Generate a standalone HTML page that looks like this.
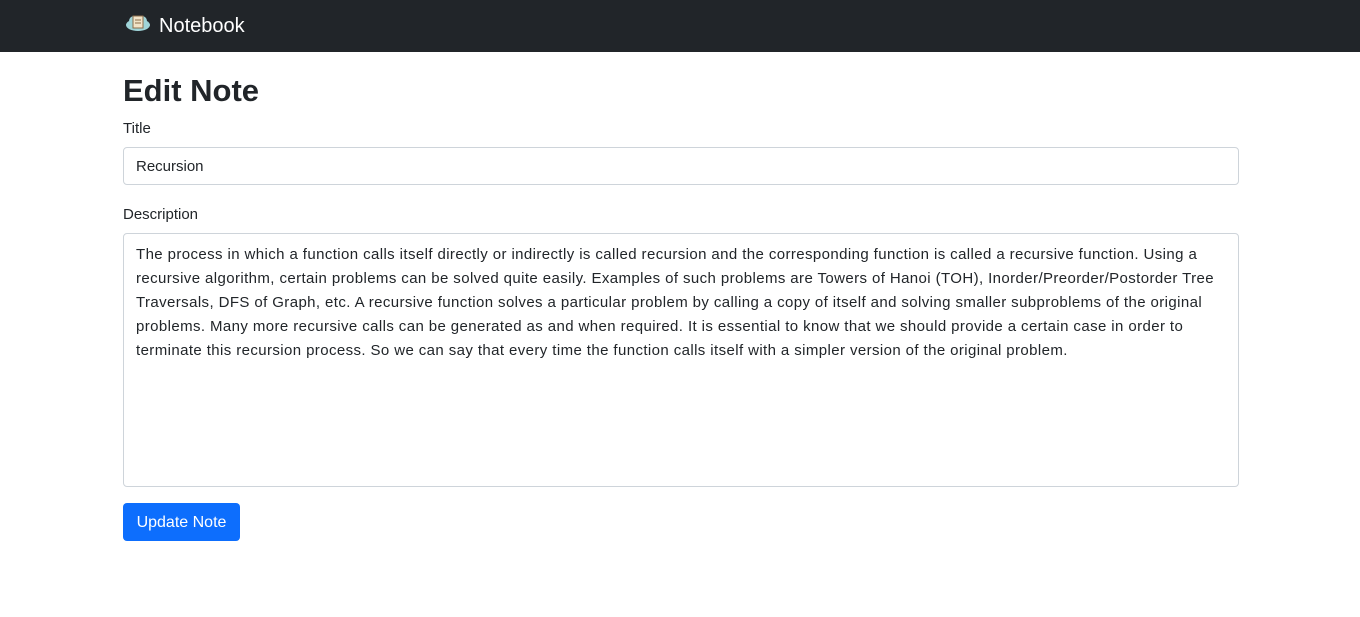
<!DOCTYPE html>
<html><head><style>
*{box-sizing:border-box;margin:0;padding:0}
body{width:1360px;height:617px;background:#fff;font-family:"Liberation Sans",sans-serif;color:#212529;overflow:hidden;position:relative}
nav{position:absolute;left:0;top:0;width:1360px;height:52px;background:#212529}
.brand{position:absolute;left:159px;top:15px;color:#fff;font-size:20px}
.logo{position:absolute;left:125px;top:13px}
h1{position:absolute;left:123px;top:72px;font-size:31px;font-weight:bold;line-height:38px}
.lbl{position:absolute;left:123px;font-size:15px}
.inp{position:absolute;left:123px;width:1116px;border:1px solid #ced4da;border-radius:4px;background:#fff}
.ta div{white-space:nowrap;font-size:15px;height:24px;line-height:24px;letter-spacing:0.4px}
.btn{position:absolute;left:123px;top:503px;width:117px;height:38px;background:#0d6efd;color:#fff;border-radius:4px;font-size:16px;line-height:39px;text-align:center}
</style></head><body>
<nav>
<svg class="logo" width="26" height="20" viewBox="0 0 26 20"><ellipse cx="13" cy="12" rx="12" ry="6" fill="#9fd4d8"/><circle cx="9" cy="8" r="5" fill="#9fd4d8"/><circle cx="17" cy="8" r="5" fill="#9fd4d8"/><rect x="8" y="3" width="10" height="12" fill="#f1e3c8" stroke="#8a6d4a"/><line x1="10" y1="7" x2="16" y2="7" stroke="#8a6d4a"/><line x1="10" y1="10" x2="16" y2="10" stroke="#8a6d4a"/></svg>
<div class="brand">Notebook</div>
</nav>
<h1>Edit Note</h1>
<div class="lbl" style="top:120px">Title</div>
<div class="inp" style="top:147px;height:38px;padding:0 12px;line-height:38px;font-size:15px">Recursion</div>
<div class="lbl" style="top:206px">Description</div>
<div class="inp ta" style="top:233px;height:254px;padding:9px 12px">
<div>The process in which a function calls itself directly or indirectly is called recursion and the corresponding function is called a recursive function. Using a</div>
<div>recursive algorithm, certain problems can be solved quite easily. Examples of such problems are Towers of Hanoi (TOH), Inorder/Preorder/Postorder Tree</div>
<div>Traversals, DFS of Graph, etc. A recursive function solves a particular problem by calling a copy of itself and solving smaller subproblems of the original</div>
<div>problems. Many more recursive calls can be generated as and when required. It is essential to know that we should provide a certain case in order to</div>
<div>terminate this recursion process. So we can say that every time the function calls itself with a simpler version of the original problem.</div>
</div>
<div class="btn">Update Note</div>
</body></html>
